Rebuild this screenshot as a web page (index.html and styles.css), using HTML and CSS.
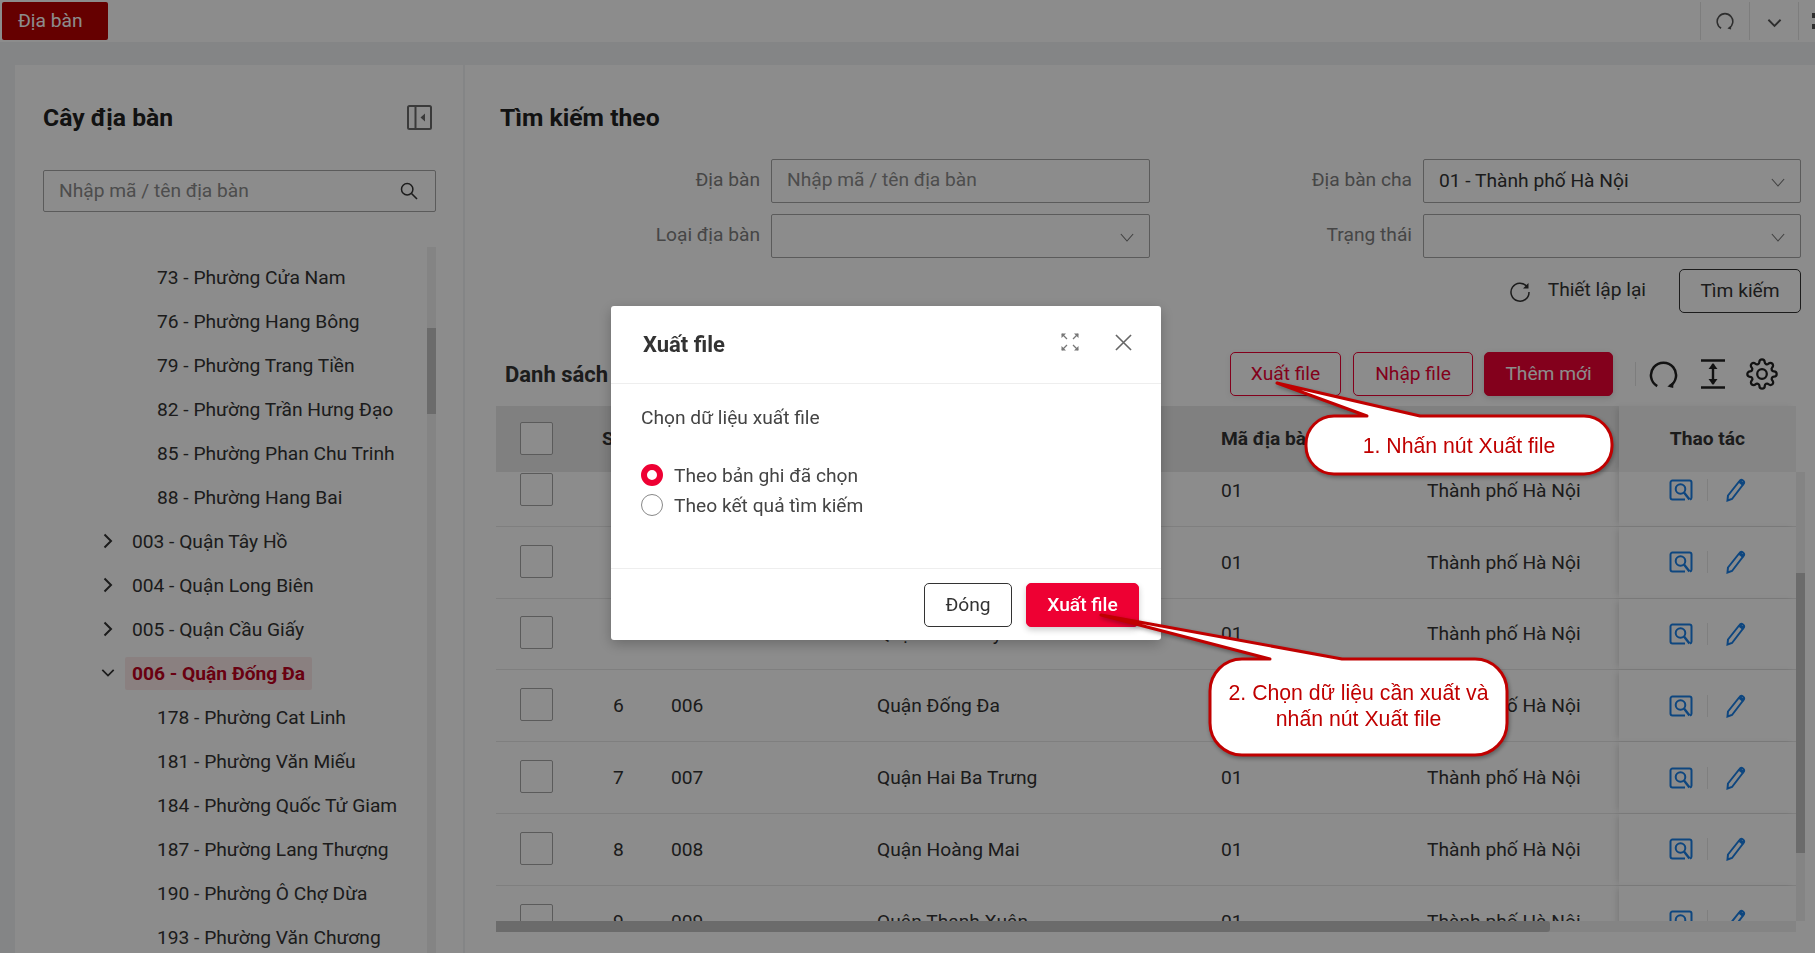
FILE: index.html
```html
<!DOCTYPE html>
<html lang="vi">
<head>
  <meta charset="UTF-8" />
  <title>Địa bàn</title>
  <link rel="stylesheet" href="styles.css">
</head>
<body>
  <svg class="defs" width="0" height="0">
    <symbol id="i-down" viewBox="0 0 16 10"><path d="M1 1l7 8 7-8" fill="none" stroke="currentColor" stroke-width="1.3"/></symbol>
    <symbol id="i-chev-r" viewBox="0 0 10 16"><path d="M1.5 1.5L8 8l-6.500 6.500" fill="none" stroke="currentColor" stroke-width="2"/></symbol>
    <symbol id="i-chev-d" viewBox="0 0 16 10"><path d="M1.500 1.500L8 8l6.500-6.500" fill="none" stroke="currentColor" stroke-width="2"/></symbol>
    <symbol id="i-loop" viewBox="0 0 30 30"><path d="M8.500 27A13 13 0 1 1 21.500 27" fill="none" stroke="currentColor" stroke-width="2.600"/><path d="M25.500 22.500l-.5 6.500-6-1.500z" fill="currentColor"/></symbol>
    <symbol id="i-view" viewBox="0 0 24 22"><path d="M16 20.500H3.500a2 2 0 0 1-2-2v-15a2 2 0 0 1 2-2h17a2 2 0 0 1 2 2v15a2 2 0 0 1-1.500 2" fill="none" stroke="currentColor" stroke-width="2"/><circle cx="11.500" cy="10" r="4.800" fill="none" stroke="currentColor" stroke-width="2"/><path d="M15 13.500l5.500 7" fill="none" stroke="currentColor" stroke-width="2.400"/></symbol>
    <symbol id="i-edit" viewBox="0 0 22 24"><path d="M3 17.500L14.500 3a2.500 2.500 0 0 1 4 3L7 21l-4.500 1.500z" fill="none" stroke="currentColor" stroke-width="2"/><path d="M15 1.800l4.800 3.700-2 2.500L13 4.200z" fill="currentColor"/></symbol>
  </svg>

  <header class="topbar">
    <div class="tab">Địa bàn</div>
    <div class="top-tools">
      <span class="tool"><svg class="loop-sm"><use href="#i-loop"/></svg></span>
      <span class="tool"><svg class="down-sm"><use href="#i-chev-d"/></svg></span>
      <span class="tool tool-last"><span class="dash"></span></span>
    </div>
  </header>

  <main class="main">
    <aside class="sidebar">
      <div class="side-head">
        <h2 class="title">Cây địa bàn</h2>
        <svg class="collapse" viewBox="0 0 25 25"><rect x="1" y="1" width="23" height="23" rx="1.500" fill="none" stroke="currentColor" stroke-width="2"/><path d="M8.500 1v23" stroke="currentColor" stroke-width="2"/><path d="M18 8.500v8l-4.500-4z" fill="currentColor"/></svg>
      </div>
      <div class="side-search">
        <span>Nhập mã / tên địa bàn</span>
        <svg class="search-ic" viewBox="0 0 18 18"><circle cx="7.200" cy="7.200" r="5.700" fill="none" stroke="currentColor" stroke-width="1.500"/><path d="M11.500 11.500l5.500 5.500" stroke="currentColor" stroke-width="1.600"/></svg>
      </div>
      <div class="tree-wrap">
        <ul class="tree">
          <li class="leaf">73 - Phường Cửa Nam</li>
          <li class="leaf">76 - Phường Hang Bông</li>
          <li class="leaf">79 - Phường Trang Tiền</li>
          <li class="leaf">82 - Phường Trần Hưng Đạo</li>
          <li class="leaf">85 - Phường Phan Chu Trinh</li>
          <li class="leaf">88 - Phường Hang Bai</li>
          <li class="node"><svg class="arrow-r"><use href="#i-chev-r"/></svg><span>003 - Quận Tây Hồ</span></li>
          <li class="node"><svg class="arrow-r"><use href="#i-chev-r"/></svg><span>004 - Quận Long Biên</span></li>
          <li class="node"><svg class="arrow-r"><use href="#i-chev-r"/></svg><span>005 - Quận Cầu Giấy</span></li>
          <li class="node"><svg class="arrow-d"><use href="#i-chev-d"/></svg><span class="active">006 - Quận Đống Đa</span></li>
          <li class="leaf">178 - Phường Cat Linh</li>
          <li class="leaf">181 - Phường Văn Miếu</li>
          <li class="leaf">184 - Phường Quốc Tử Giam</li>
          <li class="leaf">187 - Phường Lang Thượng</li>
          <li class="leaf">190 - Phường Ô Chợ Dừa</li>
          <li class="leaf">193 - Phường Văn Chương</li>
        </ul>
        <div class="tree-scroll"><div class="tree-thumb"></div></div>
      </div>
    </aside>

    <section class="content">
      <div class="search-box">
        <h2 class="title">Tìm kiếm theo</h2>
        <div class="form-grid">
          <label class="lbl">Địa bàn</label>
          <div class="field placeholder">Nhập mã / tên địa bàn</div>
          <label class="lbl">Địa bàn cha</label>
          <div class="field">01 - Thành phố Hà Nội<svg class="down"><use href="#i-down"/></svg></div>
          <label class="lbl">Loại địa bàn</label>
          <div class="field"><svg class="down"><use href="#i-down"/></svg></div>
          <label class="lbl">Trạng thái</label>
          <div class="field"><svg class="down"><use href="#i-down"/></svg></div>
        </div>
        <div class="form-actions">
          <span class="reset">
            <svg class="reset-ic" viewBox="0 0 20 20"><path d="M17 4.500A9 9 0 1 0 19 10" fill="none" stroke="currentColor" stroke-width="1.500"/><path d="M18.500 1v5.500H13z" fill="currentColor"/></svg>
            Thiết lập lại
          </span>
          <button class="btn btn-find">Tìm kiếm</button>
        </div>
      </div>

      <div class="list-head">
        <h3 class="list-title">Danh sách địa bàn</h3>
        <div class="list-tools">
          <button class="btn btn-line btn-export">Xuất file</button>
          <button class="btn btn-line btn-import">Nhập file</button>
          <button class="btn btn-add">Thêm mới</button>
          <span class="tools-sep"></span>
          <svg class="tool-ic"><use href="#i-loop"/></svg>
          <svg class="height-ic" viewBox="0 0 24 30"><path d="M0 1.500h24M0 28.500h24M12 5v20" stroke="currentColor" stroke-width="2.400" fill="none"/><path d="M12 4l4.500 6h-9zM12 26l4.500-6h-9z" fill="currentColor"/></svg>
          <svg class="gear-ic" viewBox="0 0 24 24" fill="none" stroke="currentColor" stroke-width="1.700"><circle cx="12" cy="12" r="3.600"/><path d="M19.400 15a1.650 1.650 0 0 0 .33 1.820l.06.06a2 2 0 0 1 0 2.830 2 2 0 0 1-2.830 0l-.06-.06a1.650 1.650 0 0 0-1.820-.33 1.650 1.650 0 0 0-1 1.510V21a2 2 0 0 1-2 2 2 2 0 0 1-2-2v-.09A1.650 1.650 0 0 0 9 19.400a1.650 1.650 0 0 0-1.820.33l-.06.06a2 2 0 0 1-2.830 0 2 2 0 0 1 0-2.830l.06-.06a1.650 1.650 0 0 0 .33-1.820 1.650 1.650 0 0 0-1.510-1H3a2 2 0 0 1-2-2 2 2 0 0 1 2-2h.09A1.650 1.650 0 0 0 4.600 9a1.650 1.650 0 0 0-.33-1.820l-.06-.06a2 2 0 0 1 0-2.830 2 2 0 0 1 2.830 0l.06.06a1.650 1.650 0 0 0 1.820.33H9a1.650 1.650 0 0 0 1-1.510V3a2 2 0 0 1 2-2 2 2 0 0 1 2 2v.09a1.650 1.650 0 0 0 1 1.510 1.650 1.650 0 0 0 1.820-.33l.06-.06a2 2 0 0 1 2.830 0 2 2 0 0 1 0 2.830l-.06.06a1.650 1.650 0 0 0-.33 1.820V9a1.650 1.650 0 0 0 1.510 1H21a2 2 0 0 1 2 2 2 2 0 0 1-2 2h-.09a1.650 1.650 0 0 0-1.510 1z"/></svg>
        </div>
      </div>

      <div class="table-wrap">
        <div class="table">
          <div class="row head">
            <div class="c-check"><span class="check"></span></div>
            <div class="c-stt">STT</div>
            <div class="c-code">Mã</div>
            <div class="c-name">Tên địa bàn</div>
            <div class="c-pcode">Mã địa bàn cha</div>
            <div class="c-pname">Tên địa bàn cha</div>
            <div class="c-act">Thao tác</div>
          </div>
          <div class="tbody">
            <div class="row">
              <div class="c-check"><span class="check"></span></div><div class="c-stt">3</div><div class="c-code">003</div><div class="c-name">Quận Tây Hồ</div><div class="c-pcode">01</div><div class="c-pname">Thành phố Hà Nội</div>
              <div class="c-act"><svg class="view"><use href="#i-view"/></svg><span class="act-sep"></span><svg class="edit"><use href="#i-edit"/></svg></div>
            </div>
            <div class="row">
              <div class="c-check"><span class="check"></span></div><div class="c-stt">4</div><div class="c-code">004</div><div class="c-name">Quận Long Biên</div><div class="c-pcode">01</div><div class="c-pname">Thành phố Hà Nội</div>
              <div class="c-act"><svg class="view"><use href="#i-view"/></svg><span class="act-sep"></span><svg class="edit"><use href="#i-edit"/></svg></div>
            </div>
            <div class="row">
              <div class="c-check"><span class="check"></span></div><div class="c-stt">5</div><div class="c-code">005</div><div class="c-name">Quận Cầu Giấy</div><div class="c-pcode">01</div><div class="c-pname">Thành phố Hà Nội</div>
              <div class="c-act"><svg class="view"><use href="#i-view"/></svg><span class="act-sep"></span><svg class="edit"><use href="#i-edit"/></svg></div>
            </div>
            <div class="row">
              <div class="c-check"><span class="check"></span></div><div class="c-stt">6</div><div class="c-code">006</div><div class="c-name">Quận Đống Đa</div><div class="c-pcode">01</div><div class="c-pname">Thành phố Hà Nội</div>
              <div class="c-act"><svg class="view"><use href="#i-view"/></svg><span class="act-sep"></span><svg class="edit"><use href="#i-edit"/></svg></div>
            </div>
            <div class="row">
              <div class="c-check"><span class="check"></span></div><div class="c-stt">7</div><div class="c-code">007</div><div class="c-name">Quận Hai Ba Trưng</div><div class="c-pcode">01</div><div class="c-pname">Thành phố Hà Nội</div>
              <div class="c-act"><svg class="view"><use href="#i-view"/></svg><span class="act-sep"></span><svg class="edit"><use href="#i-edit"/></svg></div>
            </div>
            <div class="row">
              <div class="c-check"><span class="check"></span></div><div class="c-stt">8</div><div class="c-code">008</div><div class="c-name">Quận Hoàng Mai</div><div class="c-pcode">01</div><div class="c-pname">Thành phố Hà Nội</div>
              <div class="c-act"><svg class="view"><use href="#i-view"/></svg><span class="act-sep"></span><svg class="edit"><use href="#i-edit"/></svg></div>
            </div>
            <div class="row">
              <div class="c-check"><span class="check"></span></div><div class="c-stt">9</div><div class="c-code">009</div><div class="c-name">Quận Thanh Xuân</div><div class="c-pcode">01</div><div class="c-pname">Thành phố Hà Nội</div>
              <div class="c-act"><svg class="view"><use href="#i-view"/></svg><span class="act-sep"></span><svg class="edit"><use href="#i-edit"/></svg></div>
            </div>
          </div>
          <div class="hscroll"><div class="hthumb"></div></div>
        </div>
        <div class="vscroll"><div class="vthumb"></div></div>
      </div>
    </section>
  </main>

  <div class="overlay"></div>

  <div class="modal">
    <div class="modal-head">
      <h3 class="modal-title">Xuất file</h3>
      <svg class="expand-ic" viewBox="0 0 18 18" fill="none" stroke="currentColor" stroke-width="1.300"><path d="M1 1l5 5M17 1l-5 5M1 17l5-5M17 17l-5-5"/><path d="M.500.500h4.500L.500 5zM17.500.500H13L17.500 5zM.500 17.500H5L.500 13zM17.500 17.500H13l4.500-4.500z" fill="currentColor" stroke="none"/></svg>
      <svg class="close-ic" viewBox="0 0 18 18"><path d="M1 1l16 16M17 1L1 17" stroke="currentColor" stroke-width="1.700"/></svg>
    </div>
    <div class="modal-body">
      <p class="modal-text">Chọn dữ liệu xuất file</p>
      <div class="radio-row"><span class="radio on"></span>Theo bản ghi đã chọn</div>
      <div class="radio-row"><span class="radio"></span>Theo kết quả tìm kiếm</div>
    </div>
    <div class="modal-foot">
      <button class="btn btn-close">Đóng</button>
      <button class="btn btn-go">Xuất file</button>
    </div>
  </div>

  <!-- chu thich ve tren anh -->
  <svg class="callout-shapes" viewBox="0 0 1815 953">
    <path class="shape" d="M1334 416H1367L1277 383L1420 416H1584A28 28 0 0 1 1612 444V446A28 28 0 0 1 1584 474H1334A28 28 0 0 1 1306 446V444A28 28 0 0 1 1334 416Z"/>
    <path class="shape" d="M1242 659H1270L1101 615L1342 659H1475A32 32 0 0 1 1507 691V723A32 32 0 0 1 1475 755H1242A32 32 0 0 1 1210 723V691A32 32 0 0 1 1242 659Z"/>
  </svg>
  <div class="callout-text note-one">1. Nhấn nút Xuất file</div>
  <div class="callout-text note-two">2. Chọn dữ liệu cần xuất và<br>nhấn nút Xuất file</div>
</body>
</html>
```

FILE: styles.css
```css
* { box-sizing: border-box; }
html, body { height: 100%; }
body { margin: 0; height: 953px; overflow: hidden; background: #f0f2f5; font-family: Roboto, "Noto Sans", sans-serif; font-size: 19.200px; color: #333; }
h2, h3, p, ul { margin: 0; padding: 0; }
button { font-family: inherit; font-size: 19.200px; cursor: pointer; padding: 0 0 2px; }
.defs { position: absolute; }

.topbar { height: 42px; background: #fff; display: flex; justify-content: space-between; padding-top: 2px; }
.tab { width: 106px; height: 38px; margin-left: 2px; background: #b90000; color: #fff; border-radius: 2px; padding-left: 16px; line-height: 37px; }
.top-tools { display: flex; }
.tool { width: 49px; height: 38px; border-left: 1px solid #e4e4e4; display: flex; align-items: center; justify-content: center; color: #555; }
.tool-last { width: 17px; justify-content: flex-end; }
.dash { width: 3px; height: 16px; border-top: 5px solid #555; border-bottom: 5px solid #555; }
.loop-sm { width: 18px; height: 18px; }
.down-sm { width: 15px; height: 10px; margin-top: 4px; }

.main { margin-top: 23px; height: 888px; margin-left: 15px; background: #fff; display: flex; }
.sidebar { width: 450px; flex: none; padding: 35px 27px 0 28px; border-right: 2px solid #f0f2f5; display: flex; flex-direction: column; }
.side-head { height: 34px; display: flex; justify-content: space-between; align-items: center; padding-right: 4px; }
.title { font-size: 24.700px; font-weight: 700; color: #222; line-height: 36px; height: 34px; }
.collapse { width: 25px; height: 25px; color: #6a6a6a; }
.side-search { margin-top: 36px; height: 42px; border: 1px solid #a6a6a6; border-radius: 2px; padding: 0 17px 2px 15px; display: flex; align-items: center; justify-content: space-between; color: #8c8c8c; }
.search-ic { width: 18px; height: 18px; color: #333; margin-top: 2px; }
.tree-wrap { margin-top: 35px; flex: 1; min-height: 0; display: flex; }
.tree { flex: 1; list-style: none; padding-top: 8px; overflow: hidden; }
.tree li { height: 44px; display: flex; align-items: center; white-space: nowrap; }
.leaf { padding-left: 114px; }
.node { padding-left: 60px; }
.node span { margin-left: 12px; padding: 0 7px; }
.arrow-r { width: 10px; height: 16px; }
.arrow-d { width: 14px; height: 10px; margin-left: -2px; margin-right: -2px; }
.node .active { margin-left: 12px; height: 33px; line-height: 33px; background: #fbeaea; color: #c00020; font-weight: 700; border-radius: 2px; }
.tree-scroll { width: 9px; background: #f0f0f0; flex: none; }
.tree-thumb { margin-top: 81px; height: 86px; background: #c4c4c4; }

.content { flex: 1; min-width: 0; padding: 35px 8px 0 31px; }
.search-box { padding: 0 6px 0 4px; }
.form-grid { margin-top: 25px; display: grid; grid-template-columns: 271px 379px 273px 1fr; grid-auto-rows: 44px; row-gap: 11px; }
.lbl { text-align: right; padding-right: 11px; line-height: 42px; color: #808080; }
.field { border: 1px solid #a6a6a6; border-radius: 2px; padding: 0 16px 2px 15px; display: flex; align-items: center; justify-content: space-between; }
.placeholder { color: #8c8c8c; padding-bottom: 4px; }
.down { width: 14px; height: 9px; color: #777; margin-left: auto; margin-right: -1px; margin-top: 5px; }
.form-actions { margin-top: 11px; height: 44px; display: flex; justify-content: flex-end; align-items: center; }
.reset { display: flex; align-items: center; gap: 18px; margin-right: 33px; padding-bottom: 3px; }
.reset-ic { width: 20px; height: 20px; margin-top: 4px; }
.btn { height: 44px; border-radius: 5px; background: #fff; border: 1px solid #333; color: #333; }
.btn-find { width: 122px; }

.list-head { margin-top: 39px; padding: 0 29px 0 9px; display: flex; justify-content: space-between; align-items: center; height: 44px; }
.list-title { font-size: 22px; font-weight: 700; color: #333; }
.list-tools { display: flex; align-items: center; }
.btn-line { border-color: #ee0033; color: #ee0033; box-shadow: 0 2px 6px rgba(0,0,0,.08); }
.btn-export { width: 111px; margin-right: 12px; }
.btn-import { width: 120px; margin-right: 11px; }
.btn-add { width: 129px; background: #ee0033; border-color: #ee0033; color: #fff; box-shadow: 0 2px 6px rgba(0,0,0,.15); }
.tools-sep { width: 1px; height: 24px; background: #e4e4e4; margin: 0 13px 0 22px; }
.tool-ic { width: 29px; height: 29px; color: #222; margin-right: 23px; }
.height-ic { width: 24px; height: 30px; color: #222; margin-right: 21px; }
.gear-ic { width: 32px; height: 32px; color: #222; }

.table-wrap { margin-top: 10px; display: flex; }
.table { width: 1300px; flex: none; }
.row { display: flex; height: 71.800px; border-bottom: 1px solid #e8e8e8; align-items: stretch; white-space: nowrap; }
.row > div { display: flex; align-items: center; }
.head { height: 66px; background: #e9e9e9; border-bottom: 0; font-weight: 700; }
.head > div { padding-bottom: 2px; }
.head .c-stt { padding-left: 5px; }
.head .c-act { justify-content: center; padding-left: 0; background: #f2f2f2; }
.tbody { height: 449px; overflow: hidden; }
.tbody .row:first-child { margin-top: -17px; }
.tbody .check { margin-top: -2px; }
.c-check { width: 101px; padding-left: 24px; }
.check { width: 33px; height: 33px; border: 1px solid #a6a6a6; border-radius: 2px; background: #fff; display: block; }
.c-stt { width: 74px; padding-left: 16px; }
.c-code { width: 206px; }
.c-name { width: 344px; }
.c-pcode { width: 206px; }
.c-pname { width: 192px; }
.c-act { width: 177px; box-shadow: -4px 0 6px -2px rgba(0,0,0,.12); background: #fff; padding-left: 50px; }
.view { width: 24px; height: 22px; color: #1a80e8; }
.act-sep { width: 1px; height: 22px; background: #e8e8e8; margin: 0 17px 0 14px; }
.edit { width: 22px; height: 24px; color: #1a80e8; }
.hscroll { height: 11px; background: #f0f0f0; }
.hthumb { width: 1054px; height: 11px; background: #c4c4c4; border-radius: 0 3px 3px 0; }
.vscroll { margin-top: 66px; width: 9px; height: 449px; background: #f0f0f0; }
.vthumb { margin-top: 101px; height: 280px; background: #c4c4c4; }

.overlay { position: fixed; inset: 0; background: rgba(0,0,0,.45); }

.modal { position: fixed; left: 611px; top: 306px; width: 550px; height: 334px; background: #fff; border-radius: 3px; box-shadow: 0 4px 14px rgba(0,0,0,.25); display: flex; flex-direction: column; }
.modal-head { height: 78px; padding: 0 29px 0 32px; border-bottom: 1px solid #eee; display: flex; align-items: center; }
.modal-title { font-size: 22px; font-weight: 700; color: #333; margin-right: auto; }
.expand-ic { width: 18px; height: 18px; color: #777; margin: -5px 36px 0 0; }
.close-ic { width: 17px; height: 17px; color: #666; margin-top: -5px; }
.modal-body { height: 185px; padding: 22px 30px 0; border-bottom: 1px solid #eee; }
.modal-text { line-height: 24px; color: #444; margin-bottom: 30px; }
.radio-row { height: 30px; display: flex; align-items: center; color: #444; }
.radio { width: 22px; height: 22px; border: 1px solid #888; border-radius: 50%; margin-right: 11px; }
.radio.on { border: 6px solid #ee0033; }
.modal-foot { flex: 1; padding: 14px 22px 0 0; display: flex; justify-content: flex-end; gap: 14px; }
.btn-close { width: 88px; }
.btn-go { width: 113px; background: #ee0033; border-color: #ee0033; color: #fff; font-weight: 500; box-shadow: 0 3px 6px rgba(0,0,0,.2); }

.callout-shapes { position: fixed; left: 0; top: 0; width: 1815px; height: 953px; pointer-events: none; }
.shape { fill: #fff; stroke: #c00000; stroke-width: 3; stroke-linejoin: round; filter: drop-shadow(1px 2px 2px rgba(0,0,0,.35)); }
.callout-text { position: fixed; font-family: "Liberation Sans", Arial, sans-serif; font-size: 21.250px; line-height: 25.500px; color: #c00000; text-align: center; }
.note-one { left: 1306px; top: 434px; width: 306px; }
.note-two { left: 1210px; top: 681px; width: 297px; }
```
